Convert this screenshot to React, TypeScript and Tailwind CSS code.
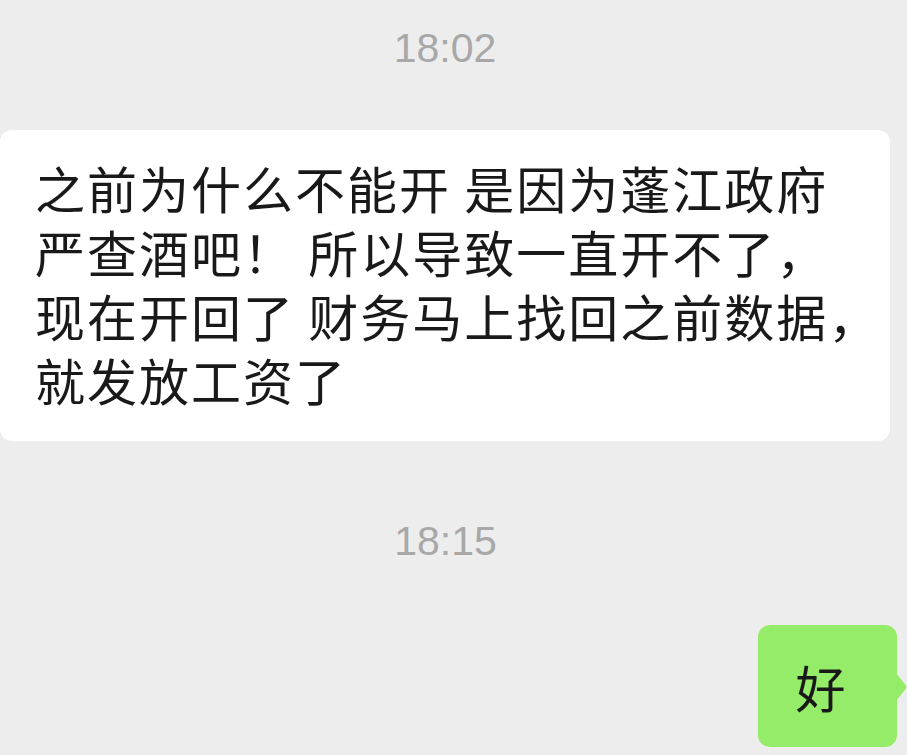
const lines = [
  "之前为什么不能开 是因为蓬江政府",
  "严查酒吧！ 所以导致一直开不了，",
  "现在开回了 财务马上找回之前数据，",
  "就发放工资了",
];

const Time = ({ t, className }: { t: string; className: string }) => (
  <div
    className={`text-center text-[41px] leading-[48px] text-[#a8a8a8] font-['Liberation_Sans',Arial,sans-serif] ${className}`}
  >
    {t}
  </div>
);

export default function App() {
  return (
    <div className="w-[907px] h-[755px] overflow-hidden bg-[#ededed] font-['Noto_Sans_CJK_SC','Noto_Sans',sans-serif]">
      <Time t="18:02" className="pt-6 pr-[17px]" />

      {/* received message */}
      <div className="mt-[58px] w-[890px] rounded-[12px] bg-white pl-[35px] pt-[25px] pb-[30px]">
        {lines.map((l) => (
          <div key={l} className="whitespace-pre text-[50px] leading-[64px] tracking-[2px] text-[#191919]">
            {l}
          </div>
        ))}
      </div>

      <Time t="18:15" className="mt-[76px] pr-[16px]" />

      {/* sent message */}
      <div className="mt-[60px] flex justify-end pr-[10px]">
        <div className="relative flex h-[122px] w-[139px] items-center justify-center rounded-[12px] bg-[#95ec69] pr-[14px] text-[50px] text-[#191919]">
          好
          <svg
            className="absolute right-[-10px] top-[48px]"
            width="11"
            height="28"
            viewBox="0 0 11 28"
          >
            <path d="M0 0 L10 12.5 Q11 14 10 15.5 L0 28 Z" fill="#95ec69" />
          </svg>
        </div>
      </div>
    </div>
  );
}
